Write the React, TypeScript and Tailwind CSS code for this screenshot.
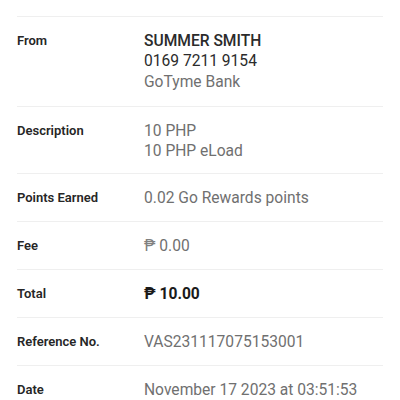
import React from "react";

const Row = ({ label, children, last, pb = "pb-[13px]" }: { label: string; children: React.ReactNode; last?: boolean; pb?: string }) => (
  <div className={`flex pt-[14px] ${pb} ${last ? "" : "border-b border-[#efefef]"}`}>
    <div className="w-[127px] shrink-0 text-[13px] font-semibold leading-5 text-[#262626]">{label}</div>
    <div className="text-[15.6px] leading-5">{children}</div>
  </div>
);

export default function App() {
  return (
    <div className="w-[400px] h-[400px] overflow-hidden bg-white" style={{ fontFamily: "Roboto, 'Liberation Sans', sans-serif" }}>
      <div className="ml-[17px] mr-[17px]">
        <div className="h-[17px] border-b border-[#efefef]" />
        <Row label="From">
          <div className="font-medium text-[#2b2b2b]">SUMMER SMITH</div>
          <div className="text-[#2b2b2b] leading-[21px]">0169 7211 9154</div>
          <div className="text-[#707070] leading-[21px]">GoTyme Bank</div>
        </Row>
        <Row label="Description" pb="pb-[12px]">
          <div className="text-[#707070]">10 PHP</div>
          <div className="text-[#707070]">10 PHP eLoad</div>
        </Row>
        <Row label="Points Earned">
          <div className="text-[#707070]">0.02 Go Rewards points</div>
        </Row>
        <Row label="Fee">
          <div className="text-[#707070]"><span className="text-[#808080]">₱</span> 0.00</div>
        </Row>
        <Row label="Total">
          <div className="text-[#1a1a1a] font-bold">₱ 10.00</div>
        </Row>
        <Row label="Reference No.">
          <div className="text-[#707070]">VAS231117075153001</div>
        </Row>
        <Row label="Date" last>
          <div className="text-[#707070]">November 17 2023 at 03:51:53</div>
        </Row>
      </div>
    </div>
  );
}
